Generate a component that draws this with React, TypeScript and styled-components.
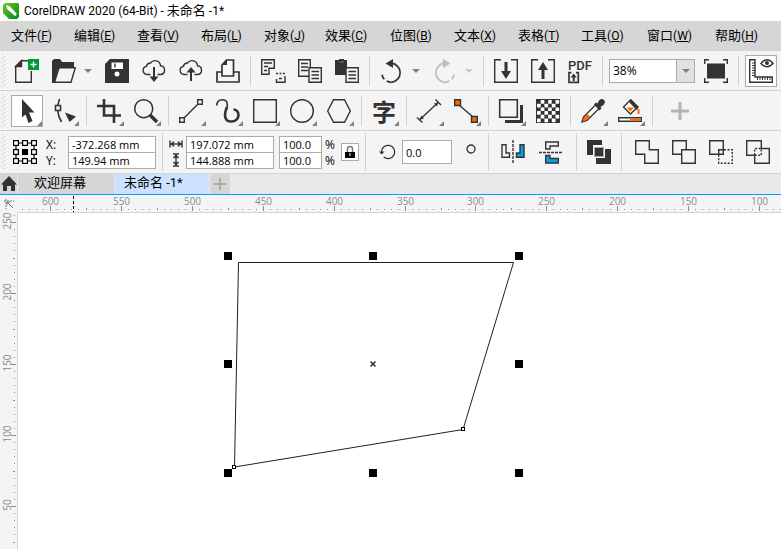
import React, { useEffect, useState } from "react";
import styled, { createGlobalStyle, css } from "styled-components";

const ink = "#333333";
const bar = "#f4f4f4";
const line = "#d4d4d4";
const accent = "#00a2f2";
const orange = "#ff6600";
const latin = '"Open Sans", "Noto Sans CJK SC", sans-serif';

const GlobalStyle = createGlobalStyle`
  * { box-sizing: border-box; }
  body { margin: 0; background: #fff; overflow: hidden; font-family: ${latin}; color: #000; }
  button, input { font: inherit; color: inherit; margin: 0; padding: 0; border-radius: 0; outline: none; }
  button { border: 0; background: none; }
  svg { display: block; overflow: visible; }
`;

const AppShell = styled.div`
  display: flex;
  flex-direction: column;
  height: 100vh;
`;

const TitleBar = styled.header`
  display: flex;
  align-items: center;
  gap: 5px;
  height: 21px;
  padding-left: 3px;
  background: #fff;
`;

const Title = styled.h1`
  margin: 0;
  font: 400 12px/20px Roboto, "Noto Sans CJK SC", sans-serif;
  white-space: pre;
`;

const Cjk = styled.span`
  font-size: 13px;
`;

const MenuBar = styled.nav`
  display: flex;
  height: 30px;
  padding-left: 11px;
  background: #d6d6d6;
  border-bottom: 1px solid ${line};
`;

const MenuItem = styled.button<{ $slot: number }>`
  flex: 0 0 ${(p) => p.$slot}px;
  text-align: left;
  font: 400 13px/28px "Noto Sans CJK SC", sans-serif;
  white-space: nowrap;
`;

const Mnemonic = styled.span`
  font: 400 12px/28px Roboto, sans-serif;
`;

const Toolbar = styled.div`
  display: flex;
  align-items: center;
  gap: 5px;
  height: 40px;
  padding-left: 1px;
  background: ${bar};
  border-bottom: 1px solid ${line};
  overflow: hidden;
`;

const PropertyBar = styled(Toolbar)`
  height: 43px;
`;

const Grip = styled.div`
  flex: none;
  align-self: stretch;
  width: 5px;
  margin: 3px 0;
  background-image: linear-gradient(#bdbdbd, #bdbdbd), linear-gradient(#bdbdbd, #bdbdbd),
    linear-gradient(#bdbdbd, #bdbdbd);
  background-size: 1px 1px;
  background-image: conic-gradient(from 270deg at 1px 1px, #bdbdbd 90deg, transparent 0),
    conic-gradient(from 270deg at 1px 1px, #bdbdbd 90deg, transparent 0);
  background-size: 4px 4px;
  background-position: 1px 0, 3px 2px;
`;

const Separator = styled.div<{ $tall?: boolean }>`
  flex: none;
  width: 3px;
  height: ${(p) => (p.$tall ? 38 : 30)}px;
  border-left: 1px solid transparent;
  background: linear-gradient(90deg, #d0d0d0 1px, transparent 1px);
  background-repeat: no-repeat;
`;

const ToolButton = styled.button<{ $active?: boolean; $flyout?: boolean }>`
  position: relative;
  flex: none;
  display: grid;
  place-items: center;
  width: 32px;
  height: 32px;
  ${(p) => p.$active && css`background: #fff; box-shadow: inset 0 0 0 1px #ababab;`}
  ${(p) => p.$flyout && css`
    &::after {
      content: "";
      position: absolute;
      right: 1px;
      bottom: 1px;
      border: solid transparent;
      border-width: 5px 0 0 5px;
      border-bottom: 5px solid #808080;
      border-top: 0;
    }
  `}
`;

const OriginButton = styled(ToolButton)`
  width: 28px;
`;

const AddButton = styled(ToolButton)`
  margin-left: 5px;
`;

const SplitButton = styled.div`
  flex: none;
  display: flex;
`;

const CaretButton = styled.button<{ $muted?: boolean; $boxed?: boolean }>`
  flex: none;
  display: grid;
  place-items: center;
  width: 16px;
  color: ${(p) => (p.$muted ? "#c8c8c8" : "#808080")};
  ${(p) => p.$boxed && css`width: 18px; background: #e1e1e1; border-left: 1px solid #ababab;`}
`;

const ZoomBox = styled.div`
  flex: none;
  display: flex;
  width: 86px;
  height: 24px;
  background: #fff;
  border: 1px solid #ababab;
`;

const ZoomInput = styled.input`
  flex: 1;
  min-width: 0;
  border: 0;
  padding-left: 3px;
  background: none;
  font-size: 12px;
`;

const GlyphText = styled.span`
  font: 700 24px/24px "Noto Sans CJK SC", sans-serif;
  color: ${ink};
`;

const FieldPair = styled.div`
  flex: none;
  display: flex;
  flex-direction: column;
`;

const FieldRow = styled.label<{ $gap: number }>`
  display: flex;
  align-items: center;
  gap: ${(p) => p.$gap}px;
  height: 16px;
  font-size: 12px;
`;

const AxisName = styled.span`
  width: 20px;
  padding-left: 2px;
`;

const Unit = styled.span`
  width: 10px;
`;

const NumberField = styled.input<{ $w: number; $tall?: boolean }>`
  flex: none;
  width: ${(p) => p.$w}px;
  height: ${(p) => (p.$tall ? 24 : 17)}px;
  padding: 0 0 0 3px;
  border: 1px solid #ababab;
  background: #fff;
  font-size: 11px;
`;

const LockButton = styled.button`
  flex: none;
  display: grid;
  place-items: center;
  width: 18px;
  height: 18px;
  margin-left: 1px;
  background: #fff;
  border: 1px solid #ababab;
`;

const RotationGroup = styled.label`
  flex: none;
  display: flex;
  align-items: center;
  gap: 7px;
  margin: 0 9px 0 7px;
`;

const DegreeMark = styled.span`
  flex: none;
  padding-bottom: 6px;
  margin-right: 6px;
`;

const IconGroup = styled.div<{ $gap: number; $before: number; $after?: number }>`
  flex: none;
  display: flex;
  gap: ${(p) => p.$gap}px;
  margin: 0 ${(p) => p.$after ?? 0}px 0 ${(p) => p.$before}px;
`;

const TabStrip = styled.div`
  display: flex;
  gap: 1px;
  height: 21px;
  background: #e9e9e9;
  border-bottom: 1px solid #00a2ff;
`;

const HomeButton = styled.button`
  width: 17px;
  display: grid;
  place-items: center;
  background: #d6d6d6;
`;

const Tab = styled.button<{ $w: number; $selected?: boolean }>`
  width: ${(p) => p.$w}px;
  padding: 0 0 2px ${(p) => (p.$selected ? 9 : 16)}px;
  text-align: left;
  font: 400 13px/18px Roboto, "Noto Sans CJK SC", sans-serif;
  white-space: pre;
  background: ${(p) => (p.$selected ? "#cce0ff" : "#d6d6d6")};
`;

const AddTab = styled.button`
  width: 20px;
  display: grid;
  place-items: center;
  background: #d6d6d6;
`;

const Workspace = styled.main`
  flex: 1;
  min-height: 0;
  display: grid;
  grid-template: 18px minmax(0, 1fr) / 18px minmax(0, 1fr);
  background: #fff;
`;

const RulerOrigin = styled.div`
  display: grid;
  place-items: center;
  background: ${bar};
`;

const TopRuler = styled.div`
  overflow: hidden;
  background: ${bar};
  border-bottom: 1px solid ${line};
`;

const SideRuler = styled.div`
  overflow: hidden;
  background: ${bar};
  border-right: 1px solid ${line};
`;

const RulerLabel = styled.text`
  font: 400 10px "Open Sans", sans-serif;
  fill: #8c8c8c;
  text-anchor: middle;
`;

const Page = styled.div`
  overflow: hidden;
`;

type IconProps = { children: React.ReactNode; size?: number; w?: number; h?: number; color?: string; sw?: number };
const Icon = ({ children, size = 24, w, h, color = ink, sw = 1.4 }: IconProps) => (
  <svg width={w ?? size} height={h ?? size} viewBox={`0 0 ${w ?? size} ${h ?? size}`} fill="none" stroke={color} strokeWidth={sw} aria-hidden="true">
    {children}
  </svg>
);

const Caret = () => (
  <svg width="8" height="4" viewBox="0 0 8 4" aria-hidden="true"><path d="M0 0H8L4 4Z" fill="currentColor" /></svg>
);

const Tool = ({ name, children, active, flyout }: { name: string; children: React.ReactNode; active?: boolean; flyout?: boolean }) => (
  <ToolButton type="button" aria-label={name} title={name} $active={active} $flyout={flyout}>{children}</ToolButton>
);

const Logo = () => (
  <svg width="16" height="16" viewBox="0 0 16 16" aria-hidden="true">
    <defs>
      <linearGradient id="logo" x1="0" y1="0" x2="1" y2="1">
        <stop offset="0" stopColor="#6cc51d" /><stop offset="1" stopColor="#008a1e" />
      </linearGradient>
    </defs>
    <path d="M2 0H15L16 1V14L14 16H6L0 10V2Z" fill="url(#logo)" />
    <path d="M3.500 2.500L6.500 3L13.500 10.500Q14 12.500 12 13L4 6Z" fill="#fff" />
    <path d="M3 2L6 3L4 6Z" fill="#d9efcf" />
  </svg>
);

const Cloud = <path d="M8.500 15.500H5A4.200 4.200 0 0 1 4.500 7.200A4 4 0 0 1 8.500 4A5.500 5.500 0 0 1 18.500 6.800A4.400 4.400 0 0 1 19 15.500H15.500" />;
const ListPage = <><path d="M11 8.700H23.300V23.300H11Z" fill={bar} /><path d="M13.500 12.500H21M13.500 16H21M13.500 19.500H21" /></>;
const Brackets = <path d="M7 .7H.7V23.300H23.300V.7H17" />;

const icons = {
  newDoc: <Icon><path d="M13 1.700H6.500L.7 7.500V23.300H16.300V12" /><path d="M.7 7.500L6.500 1.700V7.500Z" fill={ink} /><path d="M13 0H24V11H13Z" fill="#009933" stroke="none" /><path d="M18.500 2.500V8.500M15.500 5.500H21.500" stroke="#fff" /></Icon>,
  open: <Icon><path d="M0 2L2 0H8L10 3H22V10H6L3 24H0Z" fill={ink} stroke="none" /><path d="M7 8.700H23.300L19 23.300H2.500Z" fill={bar} /></Icon>,
  save: <Icon><path d="M5 0H24V24H0V5Z" fill={ink} stroke="none" /><path d="M6.500 3.500H18V10H6.500Z" fill="#fff" stroke="none" /><path d="M10 4.500V8.500" /><circle cx="12" cy="15" r="2.500" fill="#fff" stroke="none" /></Icon>,
  cloudDown: <Icon>{Cloud}<path d="M12 8V19" strokeWidth="2" /><path d="M7.500 17.500H16.500L12 23Z" fill={ink} stroke="none" /></Icon>,
  cloudUp: <Icon>{Cloud}<path d="M12 12V22" strokeWidth="2" /><path d="M7.500 13.500H16.500L12 8Z" fill={ink} stroke="none" /></Icon>,
  print: <Icon sw={1.700}><path d="M6 13H1V23H23V13H18" /><path d="M6 17V6L10.500 1H17.500V17Z" fill="#f9f9f9" /><path d="M6 6L11 1V6Z" fill={ink} stroke="none" /></Icon>,
  cut: <Icon><path d="M.7 .7H13.300V9.300H8V15.300H.7Z" /><path d="M3 4H11M3 7.500H7M3 11.500H6" /><path d="M15 14.500H24" strokeDasharray="2 1.500" /><path d="M24 17V23.300H15.500V20M18 19.500H21" /></Icon>,
  copy: <Icon><path d="M.7 .7H12.300V17.300H.7Z" /><path d="M3 4.500H10M3 8H10M3 11.500H10" />{ListPage}</Icon>,
  paste: <Icon><path d="M0 1H4V0H9V1H12V16H0Z" fill={ink} stroke="none" /><path d="M4 3H9" stroke="#777" strokeWidth="1" />{ListPage}</Icon>,
  undo: <Icon sw={1.700}><path d="M11.500 4.200A9.600 9.600 0 0 1 11.500 23.300" /><path d="M11.500 23.300A9.600 9.600 0 0 1 1.800 13" strokeDasharray="5 3" /><path d="M5.500 4.500L13 0V9Z" fill={ink} stroke="none" /></Icon>,
  redo: <Icon sw={1.700} color="#bcbcbc"><path d="M11.500 4.200A9.600 9.600 0 0 0 11.500 23.300" /><path d="M11.500 23.300A9.600 9.600 0 0 0 21.200 13" strokeDasharray="5 3" /><path d="M17.500 4.500L10 0V9Z" fill="#bcbcbc" stroke="none" /></Icon>,
  importFile: <Icon>{Brackets}<path d="M12 3V14" strokeWidth="3" /><path d="M7 12H17L12 20Z" fill={ink} stroke="none" /></Icon>,
  exportFile: <Icon>{Brackets}<path d="M12 20V9" strokeWidth="3" /><path d="M7 11H17L12 3Z" fill={ink} stroke="none" /></Icon>,
  pdf: <Icon w={26} h={24}><text x="13" y="11" textAnchor="middle" fontFamily="Roboto, sans-serif" fontSize="13" fontWeight="500" fill={ink} stroke="none">PDF</text><path d="M4.500 13.700H2V23.300H11.300V13.700H9" strokeWidth="1.700" /><path d="M6.700 22V17" strokeWidth="2" /><path d="M3.500 18.500H9.800L6.700 14.500Z" fill={ink} stroke="none" /></Icon>,
  fullScreen: <Icon><path d="M3 4.500H21V19.500H3Z" fill={ink} stroke="none" /><path d="M.7 5V.7H5M19 .7H23.300V5M23.300 19V23.300H19M5 23.300H.7V19" /></Icon>,
  rulers: <Icon><path d="M.7 .7H6V18H23.300V23.300H.7Z" /><path d="M3 4H6M3 6.500H6M3 9H6M3 11.500H6M3 14H6M3 16.500H6M8.500 18V21M11 18V21M13.500 18V21M16 18V21M18.500 18V21M21 18V21" strokeWidth="1" /><path d="M12 4.500Q18 -3 24 4.500Q18 11 12 4.500Z" strokeWidth="1.500" /><circle cx="18" cy="4" r="2" fill={ink} stroke="none" /></Icon>,
  pick: <Icon><path d="M7 0L19.500 13.500H14L17.500 22L13.500 24L10.500 15.500L7 18.500Z" fill={ink} stroke="none" /></Icon>,
  shape: <Icon sw={1.600}><path d="M7.500 0Q3 12 9.500 23" /><path d="M3.500 6.500H8.500V11.500H3.500Z" fill={bar} /><path d="M13 13.500L24 17.500L17.500 23Z" fill={ink} stroke="none" /></Icon>,
  crop: <Icon sw={2.600}><path d="M7 0V16.500H24M0 7H17V24" /></Icon>,
  zoom: <Icon sw={1.500}><circle cx="9.700" cy="9.700" r="9" /><path d="M16 16L23 23" strokeWidth="3.500" /></Icon>,
  line: <Icon><path d="M4.500 19.500L19.500 4.500" /><path d="M.7 18.700H5.300V23.300H.7ZM18.700 .7H23.300V5.300H18.700Z" fill={bar} /></Icon>,
  curve: <Icon sw={1.600}><path d="M.8 6.500C.8 2 4 .8 6.500 .8C12 .8 12 6 10.500 10.500" /><path d="M11 8C8 15 8 22 14.500 22.500C20 23 22.500 19 22.500 16C22.500 12.500 20 10.500 17.500 10.500" strokeWidth="2.600" /></Icon>,
  rect: <Icon><path d="M.7 .7H23.300V23.300H.7Z" /></Icon>,
  ellipse: <Icon><circle cx="12" cy="12" r="11.300" /></Icon>,
  polygon: <Icon><path d="M.7 12L6.500 .7H17.500L23.300 12L17.500 23.300H6.500Z" /></Icon>,
  dimension: <Icon><path d="M3 20.500L21 3.500M0 18.500L5.500 23.500M18.500 .5L24 6" /><path d="M3 20.500L4 16.500L7 19.500ZM21 3.500L17 4.500L20 7.500Z" fill={ink} stroke="none" /></Icon>,
  connector: <Icon><path d="M5 6L19 18" /><path d="M.7 .7H6.500V6.500H.7ZM17.500 17.500H23.300V23.300H17.500Z" fill={orange} /></Icon>,
  shadow: <Icon><path d="M6 21H21V6H24V24H6Z" fill={ink} stroke="none" /><path d="M.7 .7H18.300V18.300H.7Z" strokeWidth="1.600" /></Icon>,
  transparency: <Icon><path d="M0 0H24V24H0Z" fill={ink} stroke="none" />{Array.from({ length: 36 }, (_, i) => ({ r: Math.floor(i / 6), c: i % 6 })).filter(({ r, c }) => (r + c) % 2 === 1).map(({ r, c }) => <rect key={`${r}-${c}`} x={1 + c * 3.7} y={1 + r * 3.7} width="3.700" height="3.700" rx=".6" fill="#fff" stroke="none" />)}</Icon>,
  dropper: <Icon><path d="M1 23L2.500 18L15 5.500L18.500 9L6 21.500Z" fill="#fff" /><path d="M1.500 22.500L3 18.500L6.500 15L9 17.500L5.500 21Z" fill={orange} stroke="none" /><path d="M13 5.500L15 3.500L16.500 4.500L18 1.500Q21 -1 23 1Q25 3 22.500 6L19.500 8L20.500 9.500L18.500 11.500Z" fill={ink} stroke="none" /></Icon>,
  fill: <Icon><path d="M12.500 1L19.500 8L12.500 15L5.500 8Z" fill="#fff" /><path d="M13 0L21 8L18.500 11L11 3Z" fill={ink} stroke="none" /><path d="M8.500 8.500H16L12.500 12.500Z" fill={orange} stroke="none" /><path d="M20.500 10V15" stroke={orange} strokeWidth="2" /><path d="M.7 18.700H23.300V22.300H.7Z" fill="#fff" /><path d="M12 19.400H22.600V21.600H12Z" fill={orange} stroke="none" /></Icon>,
  add: <Icon size={18} color="#b2b2b2" sw={3}><path d="M9 0V18M0 9H18" /></Icon>,
  origin: <Icon color="#000" sw={1.200}><path d="M3 3H21V21H3Z" />{[0, 1, 2].flatMap((r) => [0, 1, 2].filter((c) => r !== 1 || c !== 1).map((c) => <rect key={`${r}${c}`} x={0.6 + c * 9} y={0.6 + r * 9} width="4.800" height="4.800" fill="#fff" />))}<path d="M9 9H15V15H9Z" fill="#000" stroke="none" /></Icon>,
  width: <Icon w={14} h={10} sw={1.500}><path d="M1 1.500V8.500M13 1.500V8.500M2 5H12M5 2.500L2.500 5L5 7.500M9 2.500L11.500 5L9 7.500" /></Icon>,
  height: <Icon w={14} h={14} sw={1.500}><path d="M4 1H10M4 13H10M7 2V12M4.500 5L7 2.500L9.500 5M4.500 9L7 11.500L9.500 9" /></Icon>,
  lock: <Icon size={14} color="#000" sw={1.500}><path d="M4.500 7V4Q4.500 1.500 7 1.500Q9.500 1.500 9.500 4V7" stroke="#777" /><path d="M2 7H12V13H2Z" fill="#000" stroke="none" /><path d="M7 8V11" stroke="#fff" strokeWidth="1" /></Icon>,
  rotate: <Icon size={16} sw={1.300}><path d="M2.500 8.500A6.600 6.600 0 1 1 4.800 13" /><path d="M0 7.500H5.500L2.800 10.500Z" fill={ink} stroke="none" /></Icon>,
  degree: <Icon size={10} sw={1.300}><circle cx="5" cy="5" r="4" /></Icon>,
  mirrorH: <Icon><path d="M1 4.700H5V13H8.500V17.300H1Z" /><path d="M23 4.700H19V13H15.500V17.300H23Z" fill={accent} /><path d="M12 0V24" strokeDasharray="3 1" /></Icon>,
  mirrorV: <Icon><path d="M19.300 2H6.700V9H11V6H19.300Z" /><path d="M19.300 23H6.700V15.500H11V18.500H19.300Z" fill={accent} /><path d="M0 12.500H24" strokeDasharray="3 1" /></Icon>,
  order: <Icon><path d="M0 0H15V5H6V15H0Z" fill={ink} stroke="none" /><path d="M18 9H24V24H9V18H18Z" fill={ink} stroke="none" /><path d="M7.500 7.500H16.500V16.500H7.500Z" fill={ink} stroke="#aaa" strokeWidth="1" /></Icon>,
  weld: <Icon><path d="M.7 .7H14.300V9.700H23.300V23.300H9.700V14.300H.7Z" /></Icon>,
  trim: <Icon><path d="M9.700 14.300H.7V.7H14.300V9.700M9.700 9.700H23.300V23.300H9.700Z" /></Icon>,
  intersect: <Icon><path d="M.7 .7H14.300V14.300H.7ZM9.700 14V9.700H14" /><path d="M15 9.700H23.300V23.300H9.700V15" strokeDasharray="2 1.500" /></Icon>,
  simplify: <Icon><path d="M9 15.300H.7V.7H15.300V8.500H23.300V23.300H8.700V15.300" /><path d="M8.700 15V8.500H15.300V15.300H9" strokeDasharray="2 1.500" /></Icon>,
};

const menus: [string, string, number][] = [
  ["文件", "F", 63], ["编辑", "E", 63], ["查看", "V", 64], ["布局", "L", 63], ["对象", "J", 61], ["效果", "C", 65],
  ["位图", "B", 64], ["文本", "X", 64], ["表格", "T", 63], ["工具", "O", 66], ["窗口", "W", 68], ["帮助", "H", 56],
];

const majorStep = 70.9;
const minors = [1, 2, 3, 4, 5, 6, 7, 8, 9];

function useWindowSize() {
  const [size, setSize] = useState({ width: window.innerWidth, height: window.innerHeight });
  useEffect(() => {
    const update = () => setSize({ width: window.innerWidth, height: window.innerHeight });
    window.addEventListener("resize", update);
    return () => window.removeEventListener("resize", update);
  }, []);
  return size;
}

/** Major divisions from one step before the first label up to the end of the visible length. */
const divisions = (start: number, length: number, first: number) =>
  Array.from({ length: Math.max(1, Math.floor((length - 8 - start) / majorStep) + 2) }, (_, i) => ({
    at: Math.round(start + (i - 1) * majorStep),
    value: Math.abs(first + 50 - i * 50),
    labelled: i > 0,
  }));

const HorizontalScale = ({ length }: { length: number }) => (
  <svg width="100%" height="17" shapeRendering="crispEdges" stroke="#8c8c8c" aria-label="水平标尺">
    {divisions(32, length, 600).map(({ at, value, labelled }) => (
      <g key={at}>
        <path d={`M${at + 0.5} 11V16`} />
        {minors.map((m) => <path key={m} d={`M${at + Math.round(m * 7.1) + 0.5} ${m === 5 ? 13 : 14}V15`} />)}
        {labelled && <RulerLabel x={at + 0.5} y="10" stroke="none">{value}</RulerLabel>}
      </g>
    ))}
    <path d="M55.500 1V17" stroke="#000" strokeDasharray="3 2" />
  </svg>
);

const VerticalScale = ({ length }: { length: number }) => (
  <svg width="17" height="100%" shapeRendering="crispEdges" stroke="#8c8c8c" aria-label="垂直标尺">
    {divisions(9, length, 250).map(({ at, value, labelled }) => (
      <g key={at}>
        <path d={`M11 ${at + 0.5}H16`} />
        {minors.map((m) => <path key={m} d={`M${m === 5 ? 13 : 14} ${at + Math.round(m * 7.1) + 0.5}H15`} />)}
        {labelled && <RulerLabel transform={`translate(11 ${at - 1}) rotate(-90)`} stroke="none">{value}</RulerLabel>}
      </g>
    ))}
  </svg>
);

const Drawing = () => (
  <svg width="100%" height="100%" aria-label="绘图">
    <path d="M220.500 49.500H495.500L445 216.500L216.500 254Z" fill="none" stroke="#231f20" strokeWidth="1" />
    {[43, 151, 260].flatMap((cy) => [210, 355, 501].filter((cx) => !(cx === 355 && cy === 151)).map((cx) => (
      <rect key={`${cx}-${cy}`} x={cx - 4} y={cy - 4} width="8" height="8" fill="#000" />
    )))}
    <path d="M352.500 148.500L357.500 153.500M357.500 148.500L352.500 153.500" stroke="#333" strokeWidth="1.600" />
    <g fill="#fff" stroke="#000"><rect x="443.500" y="214.500" width="3" height="3" /><rect x="214.500" y="252.500" width="3" height="3" /></g>
  </svg>
);

export default function App() {
  const { width, height } = useWindowSize();
  return (
    <AppShell>
      <GlobalStyle />
      <TitleBar>
        <Logo />
        <Title>CorelDRAW 2020 (64-Bit) - <Cjk>未命名</Cjk> -1*</Title>
      </TitleBar>
      <MenuBar>
        {menus.map(([label, key, slot]) => (
          <MenuItem key={key} type="button" $slot={slot}>{label}<Mnemonic>(<u>{key}</u>)</Mnemonic></MenuItem>
        ))}
      </MenuBar>

      <Toolbar role="toolbar" aria-label="标准">
        <Grip />
        <Tool name="新建">{icons.newDoc}</Tool>
        <SplitButton><Tool name="打开">{icons.open}</Tool><CaretButton type="button" aria-label="最近文件"><Caret /></CaretButton></SplitButton>
        <Tool name="保存">{icons.save}</Tool>
        <Tool name="从云中打开">{icons.cloudDown}</Tool>
        <Tool name="保存到云">{icons.cloudUp}</Tool>
        <Tool name="打印">{icons.print}</Tool>
        <Separator />
        <Tool name="剪切">{icons.cut}</Tool>
        <Tool name="复制">{icons.copy}</Tool>
        <Tool name="粘贴">{icons.paste}</Tool>
        <Separator />
        <SplitButton><Tool name="撤消">{icons.undo}</Tool><CaretButton type="button" aria-label="撤消列表"><Caret /></CaretButton></SplitButton>
        <SplitButton><Tool name="重做">{icons.redo}</Tool><CaretButton type="button" aria-label="重做列表" $muted><Caret /></CaretButton></SplitButton>
        <Separator />
        <Tool name="导入">{icons.importFile}</Tool>
        <Tool name="导出">{icons.exportFile}</Tool>
        <Tool name="发布为 PDF">{icons.pdf}</Tool>
        <Separator />
        <ZoomBox>
          <ZoomInput aria-label="缩放级别" defaultValue="38%" />
          <CaretButton type="button" aria-label="缩放选项" $boxed><Caret /></CaretButton>
        </ZoomBox>
        <Tool name="全屏预览">{icons.fullScreen}</Tool>
        <Separator />
        <Tool name="显示标尺" active>{icons.rulers}</Tool>
      </Toolbar>

      <Toolbar role="toolbar" aria-label="工具箱">
        <Grip />
        <Tool name="选择" active flyout>{icons.pick}</Tool>
        <Tool name="形状" flyout>{icons.shape}</Tool>
        <Separator />
        <Tool name="裁剪" flyout>{icons.crop}</Tool>
        <Tool name="缩放" flyout>{icons.zoom}</Tool>
        <Separator />
        <Tool name="手绘" flyout>{icons.line}</Tool>
        <Tool name="艺术笔" flyout>{icons.curve}</Tool>
        <Tool name="矩形" flyout>{icons.rect}</Tool>
        <Tool name="椭圆形" flyout>{icons.ellipse}</Tool>
        <Tool name="多边形" flyout>{icons.polygon}</Tool>
        <Separator />
        <Tool name="文本" flyout><GlyphText>字</GlyphText></Tool>
        <Separator />
        <Tool name="平行度量" flyout>{icons.dimension}</Tool>
        <Tool name="连接器" flyout>{icons.connector}</Tool>
        <Separator />
        <Tool name="阴影" flyout>{icons.shadow}</Tool>
        <Tool name="透明度">{icons.transparency}</Tool>
        <Separator />
        <Tool name="颜色滴管" flyout>{icons.dropper}</Tool>
        <Tool name="交互式填充" flyout>{icons.fill}</Tool>
        <Separator />
        <AddButton type="button" aria-label="自定义">{icons.add}</AddButton>
      </Toolbar>

      <PropertyBar role="toolbar" aria-label="属性栏">
        <Grip />
        <OriginButton type="button" aria-label="对象原点">{icons.origin}</OriginButton>
        <FieldPair>
          <FieldRow $gap={4}><AxisName>X:</AxisName><NumberField $w={88} defaultValue="-372.268 mm" /></FieldRow>
          <FieldRow $gap={4}><AxisName>Y:</AxisName><NumberField $w={88} defaultValue="149.94 mm" /></FieldRow>
        </FieldPair>
        <Separator $tall />
        <FieldPair>
          <FieldRow $gap={3}>{icons.width}<NumberField $w={88} aria-label="宽度" defaultValue="197.072 mm" /></FieldRow>
          <FieldRow $gap={3}>{icons.height}<NumberField $w={88} aria-label="高度" defaultValue="144.888 mm" /></FieldRow>
        </FieldPair>
        <FieldPair>
          <FieldRow $gap={3}><NumberField $w={43} defaultValue="100.0" /><Unit>%</Unit></FieldRow>
          <FieldRow $gap={3}><NumberField $w={43} defaultValue="100.0" /><Unit>%</Unit></FieldRow>
        </FieldPair>
        <LockButton type="button" aria-label="锁定比率">{icons.lock}</LockButton>
        <Separator $tall />
        <RotationGroup>{icons.rotate}<NumberField $w={50} $tall aria-label="旋转角度" defaultValue="0.0" /></RotationGroup>
        <DegreeMark>{icons.degree}</DegreeMark>
        <Separator $tall />
        <IconGroup $gap={6} $before={2} $after={3}>
          <Tool name="水平镜像">{icons.mirrorH}</Tool>
          <Tool name="垂直镜像">{icons.mirrorV}</Tool>
        </IconGroup>
        <Separator $tall />
        <Tool name="顺序">{icons.order}</Tool>
        <Separator $tall />
        <IconGroup $gap={5} $before={3}>
          <Tool name="焊接">{icons.weld}</Tool>
          <Tool name="修剪">{icons.trim}</Tool>
          <Tool name="相交">{icons.intersect}</Tool>
          <Tool name="简化">{icons.simplify}</Tool>
        </IconGroup>
      </PropertyBar>

      <TabStrip>
        <HomeButton type="button" aria-label="主页"><Icon size={16}><path d="M8 0L16 8.500H14V15H10V10H6V15H2V8.500H0Z" fill={ink} stroke="none" /></Icon></HomeButton>
        <Tab type="button" $w={96}>欢迎屏幕</Tab>
        <Tab type="button" $w={94} $selected>未命名 -1*</Tab>
        <AddTab type="button" aria-label="新建选项卡"><Icon size={12} color="#ababab" sw={2}><path d="M6 0V12M0 6H12" /></Icon></AddTab>
      </TabStrip>

      <Workspace>
        <RulerOrigin><Icon size={10} color="#777" sw={1}><path d="M0 2H10M2 0V10" strokeDasharray="2 1" /><path d="M3 3L9 9M3 6V3H6" /></Icon></RulerOrigin>
        <TopRuler><HorizontalScale length={width - 18} /></TopRuler>
        <SideRuler><VerticalScale length={height - 213} /></SideRuler>
        <Page><Drawing /></Page>
      </Workspace>
    </AppShell>
  );
}
